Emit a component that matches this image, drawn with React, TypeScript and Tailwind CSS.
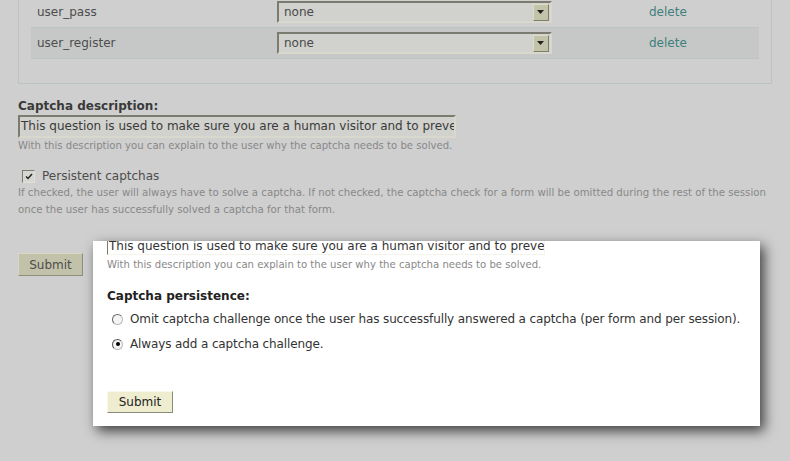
import React from "react";

function FakeSelect() {
  return (
    <div className="flex h-[22px] w-[275px] items-center justify-between border-2 border-t-[#7b7b6f] border-l-[#7b7b6f] border-r-[#d8d8cc] border-b-[#d8d8cc] bg-[#d1d1cd] pl-[5px] pr-[1px] text-[12px] text-[#4a4a4a]">
      <span>none</span>
      <span className="flex h-[17px] w-[16px] items-center justify-center border border-t-[#dcdcc8] border-l-[#dcdcc8] border-r-[#7e7e6c] border-b-[#7e7e6c] bg-[#c3c3a9]">
        <svg width="8" height="5" viewBox="0 0 8 5">
          <path d="M0 0h7L3.5 4z" fill="#222" />
        </svg>
      </span>
    </div>
  );
}

const rows = [
  { name: "user_pass", shade: false },
  { name: "user_register", shade: true },
];

export default function App() {
  return (
    <div
      className="relative h-[461px] w-[790px] overflow-hidden bg-[#cfcfcf] text-[#4d4d4d]"
      style={{ fontFamily: '"DejaVu Sans", Verdana, sans-serif' }}
    >
      {/* dimmed page behind */}
      <div className="mx-[18px] -mt-[3px] h-[87px] border-x border-b border-[#bcc3c3] px-[12px]">
        {rows.map((r) => (
          <div
            key={r.name}
            className={
              "flex h-[31px] items-center border-b border-[#bcc4c4] " +
              (r.shade ? "bg-[#c6c8c7]" : "")
            }
          >
            <div className="w-[246px] pl-[6px] text-[12px]">{r.name}</div>
            <FakeSelect />
            <div className="ml-[97px] text-[12px] text-[#3f7f7d]">delete</div>
          </div>
        ))}
      </div>

      <div className="px-[18px] pt-[14px]">
        <div className="text-[12px] font-bold leading-[16px] text-[#3a3a3a]">Captcha description:</div>
        <div className="mt-[1px] h-[23px] w-[438px] overflow-hidden whitespace-nowrap border-2 border-t-[#7b7b6f] border-l-[#7b7b6f] border-r-[#d8d8cc] border-b-[#d8d8cc] bg-[#d1d1cd] pl-[1px] text-[12px] leading-[19px] text-[#3a3a3a]">
          This question is used to make sure you are a human visitor and to preve
        </div>
        <div className="mt-[1px] text-[10.1px] leading-[14px] text-[#888888]">
          With this description you can explain to the user why the captcha needs to be solved.
        </div>

        <label className="mt-[15px] flex h-[16px] items-center gap-[7px] pl-[4px]">
          <span className="flex h-[13px] w-[13px] items-center justify-center border border-t-[#7b7b6f] border-l-[#7b7b6f] border-r-[#e0e0d8] border-b-[#e0e0d8] bg-[#d6d6d2]">
            <svg width="8" height="7" viewBox="0 0 8 7">
              <path d="M1 3.5l2 2L7 1" stroke="#222" strokeWidth="1.5" fill="none" />
            </svg>
          </span>
          <span className="text-[12px] leading-[16px] text-[#4d4d4d]">Persistent captchas</span>
        </label>
        <div className="text-[10.2px] leading-[17px] text-[#888888]">
          If checked, the user will always have to solve a captcha. If not checked, the captcha check for a form will be omitted during the rest of the session
          <br />
          once the user has successfully solved a captcha for that form.
        </div>

        <button className="mt-[35px] h-[23px] w-[65px] border border-t-[#d8d8c4] border-l-[#d8d8c4] border-r-[#8e8e7c] border-b-[#8e8e7c] bg-[#c2c2aa] text-[12px] text-[#4d4d4d]">
          Submit
        </button>
      </div>

      {/* inset screenshot panel */}
      <div className="absolute left-[93px] top-[241px] h-[185px] w-[667px] overflow-hidden bg-white px-[14px] shadow-[4px_5px_12px_rgba(0,0,0,0.7)]">
        <div className="-mt-[6px] h-[20px] w-[438px] overflow-hidden whitespace-nowrap border border-l-[#777] border-t-[#777] border-r-[#f4f4e8] border-b-[#f4f4e8] pl-[1px] pt-[2px] text-[12px] leading-[16px] text-[#333]">
          This question is used to make sure you are a human visitor and to preve
        </div>
        <div className="mt-[3px] text-[10.1px] leading-[14px] text-[#888]">
          With this description you can explain to the user why the captcha needs to be solved.
        </div>
        <div className="mt-[16px] text-[12px] font-bold leading-[16px] text-[#222]">Captcha persistence:</div>
        <div className="mt-[7px] flex flex-col gap-[9px] pl-[5px] text-[12px] leading-[16px] tracking-[-0.12px] text-[#333]">
          <label className="flex items-center gap-[7px]">
            <span className="h-[11px] w-[11px] rounded-full border border-[#bbb] border-t-[#666] border-l-[#666] bg-[#f4f4f4]" />
            Omit captcha challenge once the user has successfully answered a captcha (per form and per session).
          </label>
          <label className="flex items-center gap-[7px]">
            <span className="flex h-[11px] w-[11px] items-center justify-center rounded-full border border-[#bbb] border-t-[#555] border-l-[#555] bg-[#f4f4f4]">
              <span className="h-[4px] w-[4px] rounded-full bg-black" />
            </span>
            Always add a captcha challenge.
          </label>
        </div>
        <button className="mt-[39px] h-[22px] w-[66px] border border-t-[#f8f8ec] border-l-[#f8f8ec] border-r-[#8a8a78] border-b-[#8a8a78] bg-[#efedd0] text-[12px] text-[#222]">
          Submit
        </button>
      </div>
    </div>
  );
}
